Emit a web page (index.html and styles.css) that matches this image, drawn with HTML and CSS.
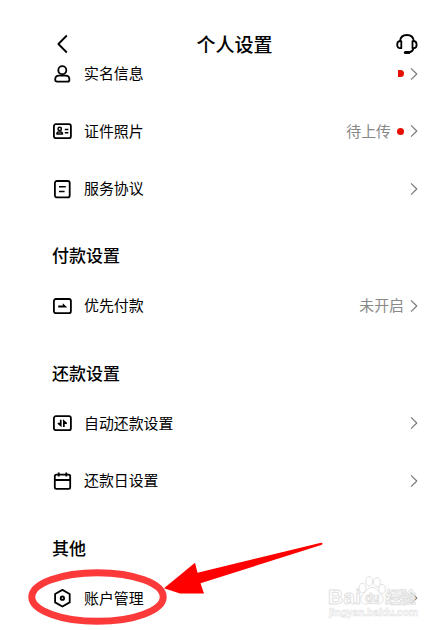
FILE: index.html
```html
<!DOCTYPE html>
<html lang="zh-CN">
  <head>
    <meta charset="utf-8" />
    <title>个人设置</title>
    <meta name="viewport" content="width=device-width, initial-scale=1.0" />
    <link rel="stylesheet" href="styles.css">
  </head>
  <body>
    <header>
      <svg class="back" width="22" height="22" viewBox="0 0 22 22"><path d="M15.8 2.5 7.4 11l8.4 8.500" /></svg>
      <h1>个人设置</h1>
      <svg class="service" width="22" height="22" viewBox="0 0 22 22">
        <path d="M3.9 8.500C4.300 4.200 7 2 10.900 2s6.600 2.200 7 6.500" />
        <path d="M5.300 8.200v7H4c-1.700 0-2.800-1.500-2.800-3.500S2.300 8.200 4 8.200zM16.500 8.200v7h1.300c1.700 0 2.800-1.500 2.800-3.500s-1.100-3.500-2.800-3.500z" />
        <path d="M17.600 15.200c-.5 2.300-2 3.700-4.600 4.300" />
        <path class="mic" d="M9.300 19.600h3.500" />
      </svg>
    </header>

    <ul class="first">
      <li>
        <svg class="icon" width="22" height="22" viewBox="0 0 22 22">
          <circle cx="11.300" cy="7.200" r="4" />
          <path d="M7.800 12.700h7c2 0 3.600 1.600 3.600 4 0 1.300-.7 2-2 2H6.200c-1.300 0-2-.7-2-2 0-2.400 1.600-4 3.600-4z" />
        </svg>
        <span class="name">实名信息</span>
        <i class="dot half"></i>
        <svg class="arrow" width="8" height="14" viewBox="0 0 8 14"><path d="M1 1.300 6.800 7 1 12.700" /></svg>
      </li>
      <li>
        <svg class="icon" width="22" height="22" viewBox="0 0 22 22">
          <rect x="2.900" y="4.200" width="17" height="14" rx="2" />
          <g class="thin">
            <circle cx="8.700" cy="8.900" r="1.700" />
            <path d="M7.700 11.900h2c1 0 1.800.8 1.800 2.200H5.900c0-1.400.8-2.200 1.800-2.200zM13.800 9.500h3.600M13.800 12.800h3.600" />
          </g>
        </svg>
        <span class="name">证件照片</span>
        <span class="state">待上传</span>
        <i class="dot"></i>
        <svg class="arrow" width="8" height="14" viewBox="0 0 8 14"><path d="M1 1.300 6.800 7 1 12.700" /></svg>
      </li>
      <li>
        <svg class="icon" width="22" height="22" viewBox="0 0 22 22">
          <rect x="3.900" y="3" width="14.800" height="16.400" rx="2" />
          <path class="thin" d="M8 8.800h6.800M8 13.400h5.600" />
        </svg>
        <span class="name">服务协议</span>
        <svg class="arrow" width="8" height="14" viewBox="0 0 8 14"><path d="M1 1.300 6.800 7 1 12.700" /></svg>
      </li>
    </ul>

    <h2>付款设置</h2>
    <ul>
      <li>
        <svg class="icon" width="22" height="22" viewBox="0 0 22 22">
          <rect x="2.900" y="4" width="17" height="14.200" rx="2" />
          <path class="solid" d="M7.200 10.600h4.600V8.200l4.400 4.400h-9z" />
        </svg>
        <span class="name">优先付款</span>
        <span class="state">未开启</span>
        <svg class="arrow" width="8" height="14" viewBox="0 0 8 14"><path d="M1 1.300 6.800 7 1 12.700" /></svg>
      </li>
    </ul>

    <h2>还款设置</h2>
    <ul>
      <li>
        <svg class="icon" width="22" height="22" viewBox="0 0 22 22">
          <rect x="2.900" y="4.200" width="17" height="14" rx="2" />
          <path class="solid" d="M8.900 7.800h1.700v7.400L6.700 12v-1.200h2.200zM12 14.900V7.200l3.900 3.500v1.200h-2.200v3z" />
        </svg>
        <span class="name">自动还款设置</span>
        <svg class="arrow" width="8" height="14" viewBox="0 0 8 14"><path d="M1 1.300 6.800 7 1 12.700" /></svg>
      </li>
      <li>
        <svg class="icon" width="22" height="22" viewBox="0 0 22 22">
          <rect x="3.800" y="4.600" width="15.400" height="14.200" rx="1.600" />
          <path d="M3.800 10h15.400M7.700 2.600v4M15.300 2.600v4" />
        </svg>
        <span class="name">还款日设置</span>
        <svg class="arrow" width="8" height="14" viewBox="0 0 8 14"><path d="M1 1.300 6.800 7 1 12.700" /></svg>
      </li>
    </ul>

    <h2>其他</h2>
    <ul>
      <li>
        <svg class="icon" width="22" height="22" viewBox="0 0 22 22">
          <path d="M11.400 2.900 18.700 7v8.400l-7.300 4.100-7.300-4.100V7z" />
          <circle cx="11.400" cy="11.200" r="1.700" />
        </svg>
        <span class="name">账户管理</span>
        <svg class="arrow" width="8" height="14" viewBox="0 0 8 14"><path d="M1 1.300 6.800 7 1 12.700" /></svg>
      </li>
    </ul>

    <!-- red circle and arrow, watermark -->
    <svg class="overlay" width="446" height="630" viewBox="0 0 446 630">
      <ellipse class="ring" cx="97.500" cy="597" rx="65.700" ry="24.300" />
      <path class="pointer" d="M164 588.200 195 562.800 197.500 572.800 320 543 322.500 542.800 322 544.800 200.500 583.200 204 593.600H180z" />
      <g class="mark">
        <text class="latin" x="328" y="604" textLength="33">Bai</text>
        <text class="cjk" x="385" y="603" textLength="31">经验</text>
        <ellipse cx="362.500" cy="588" rx="3.600" ry="4.700" />
        <ellipse cx="369.200" cy="581.200" rx="3.500" ry="4.700" />
        <ellipse cx="377" cy="582.300" rx="3.500" ry="4.700" />
        <ellipse cx="382" cy="589" rx="3.300" ry="4.500" />
        <path d="M372 587.500c4 0 5.500 3.500 8.500 6.300 4.500 4.200 3 10.200-2 10.200-2.500 0-4-.6-6.500-.6s-4 .6-6.500.6c-5 0-6.500-6-2-10.200 3-2.800 4.500-6.300 8.500-6.300z" />
        <text class="du" x="365" y="602">du</text>
        <text class="site" x="329" y="616" textLength="89">jingyan.baidu.com</text>
      </g>
    </svg>
  </body>
</html>
```

FILE: styles.css
```css
body {
  font-family: "Noto Sans CJK SC", sans-serif;
  position: relative;
  width: 446px;
  height: 630px;
  margin: 0;
  overflow: hidden;
  background: #fff;
  color: #000;
}

svg {
  fill: none;
  stroke: #000;
  stroke-width: 1.8;
  stroke-linejoin: round;
  flex: none;
}

header {
  display: flex;
  align-items: center;
  justify-content: space-between;
  height: 60px;
  box-sizing: border-box;
  padding: 28px 28px 0 51px;
}

h1 {
  margin: 0;
  font-size: 19px;
  line-height: 28px;
  font-weight: 500;
}

.service .mic {
  stroke-width: 3;
  stroke-linecap: round;
}

ul {
  list-style: none;
  margin: 0;
  padding: 0 28px 0 51px;
}

ul.first {
  margin-top: -15.3px;
}

li {
  display: flex;
  align-items: center;
  height: 57.6px;
  font-size: 14.9px;
}

.name {
  flex: 1;
  margin-left: 11px;
  padding-bottom: 2px;
}

.thin {
  stroke-width: 1.5;
}

.solid {
  fill: #000;
  stroke: none;
}

.state {
  color: #888;
  margin-right: 6px;
  padding-bottom: 2px;
}

.dot {
  width: 7px;
  height: 7px;
  border-radius: 50%;
  background: #e60f00;
  margin-right: 6px;
}

.dot.half {
  width: 6px;
  border-radius: 0 4px 4px 0;
}

.arrow {
  stroke: #777;
  stroke-width: 1.1;
}

h2 {
  height: 59.7px;
  box-sizing: border-box;
  margin: 0;
  padding: 25px 0 0 52px;
  font-size: 17px;
  line-height: 26px;
  font-weight: 500;
}

.overlay {
  position: absolute;
  left: 0;
  top: 0;
}

.ring {
  stroke: #fc3a3a;
  stroke-width: 7;
}

.pointer {
  fill: #f00;
  stroke: none;
}

.mark {
  fill: #fff;
  fill-opacity: 0.6;
  stroke: #dedede;
  stroke-width: 0.9;
}

.mark text {
  font-family: "Liberation Sans", "Noto Sans CJK SC", sans-serif;
  font-weight: bold;
}

.mark .latin {
  font-size: 21px;
}

.mark .cjk {
  font-size: 16px;
}

.mark .du {
  font-size: 12px;
}

.mark .site {
  font-size: 10.5px;
  stroke-width: 0.5;
}
```
